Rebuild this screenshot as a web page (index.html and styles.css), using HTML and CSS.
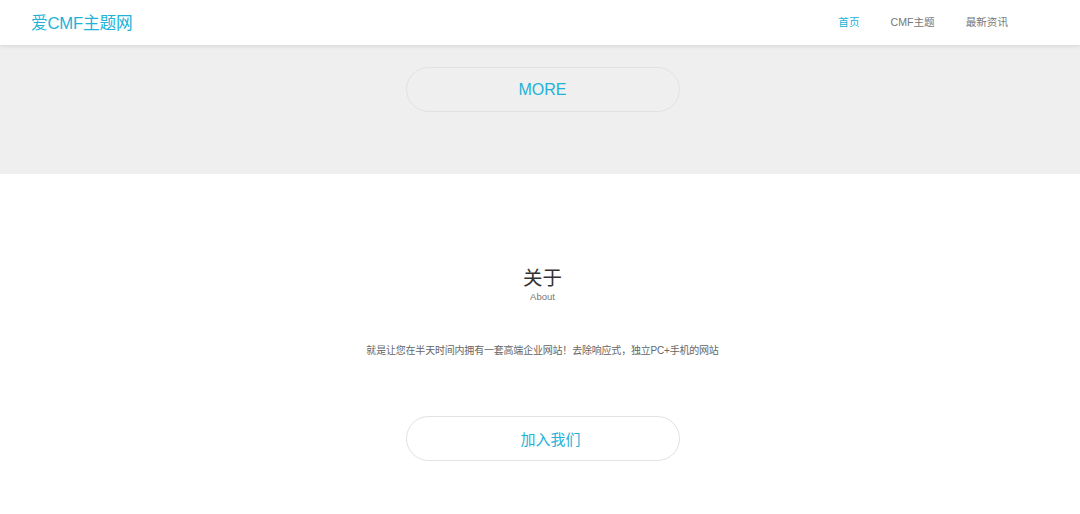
FILE: index.html
```html
<!DOCTYPE html>
<html lang="zh-CN">
<head>
    <meta charset="UTF-8">
    <meta name="viewport" content="width=device-width, initial-scale=1.0">
    <title>爱CMF主题网</title>
    <link rel="stylesheet" href="styles.css">
</head>
<body>

<header class="topbar">
    <a class="logo" href="#">爱CMF主题网</a>
    <nav class="nav">
        <a class="active" href="#">首页</a>
        <a href="#">CMF主题</a>
        <a href="#">最新资讯</a>
    </nav>
</header>

<section class="more-band">
    <a class="pill-btn" href="#">MORE</a>
</section>

<section class="about">
    <h2>关于</h2>
    <p class="sub">About</p>
    <p class="desc">就是让您在半天时间内拥有一套高端企业网站！去除响应式，独立PC+手机的网站</p>
    <a class="pill-btn pill-white" href="#">加入我们</a>
</section>

</body>
</html>
```

FILE: styles.css
```css
* {
    box-sizing: border-box;
    margin: 0;
    padding: 0;
}
body {
    font-family: "Liberation Sans", "Noto Sans CJK SC", sans-serif;
    background: #fff;
    color: #333;
    overflow: hidden;
}
a {
    text-decoration: none;
}
.topbar {
    position: relative;
    z-index: 2;
    height: 45px;
    display: flex;
    align-items: center;
    justify-content: space-between;
    padding: 0 72px 2px 31px;
    background: #fff;
    box-shadow: 0 1px 4px rgba(0, 0, 0, 0.12);
}
.logo {
    color: #22b2d8;
    font-size: 16.7px;
    letter-spacing: -0.2px;
}
.nav {
    display: flex;
    gap: 31px;
}
.nav a {
    font-size: 10.6px;
    color: #777;
}
.nav a.active {
    color: #22b2d8;
}
.more-band {
    background: #efefef;
    height: 129px;
    display: flex;
    justify-content: center;
    align-items: flex-start;
    padding: 22px 0 0 5px;
}
.pill-btn {
    display: flex;
    justify-content: center;
    align-items: center;
    width: 274px;
    height: 45px;
    border: 1px solid #e2e2e2;
    border-radius: 23px;
    color: #22b2d8;
    font-size: 16px;
}
.about {
    display: flex;
    flex-direction: column;
    align-items: center;
    padding: 91px 0 0 5px;
}
.about h2 {
    font-weight: normal;
    font-size: 19.5px;
    color: #333;
    line-height: 26px;
}
.sub {
    font-size: 9.5px;
    color: #777;
    line-height: 12px;
}
.desc {
    font-size: 10px;
    letter-spacing: -0.2px;
    color: #666;
    margin-top: 40px;
    line-height: 16px;
}
.pill-white {
    margin-top: 57px;
    padding-left: 16px;
    background: #fff;
    font-size: 15px;
}
```
